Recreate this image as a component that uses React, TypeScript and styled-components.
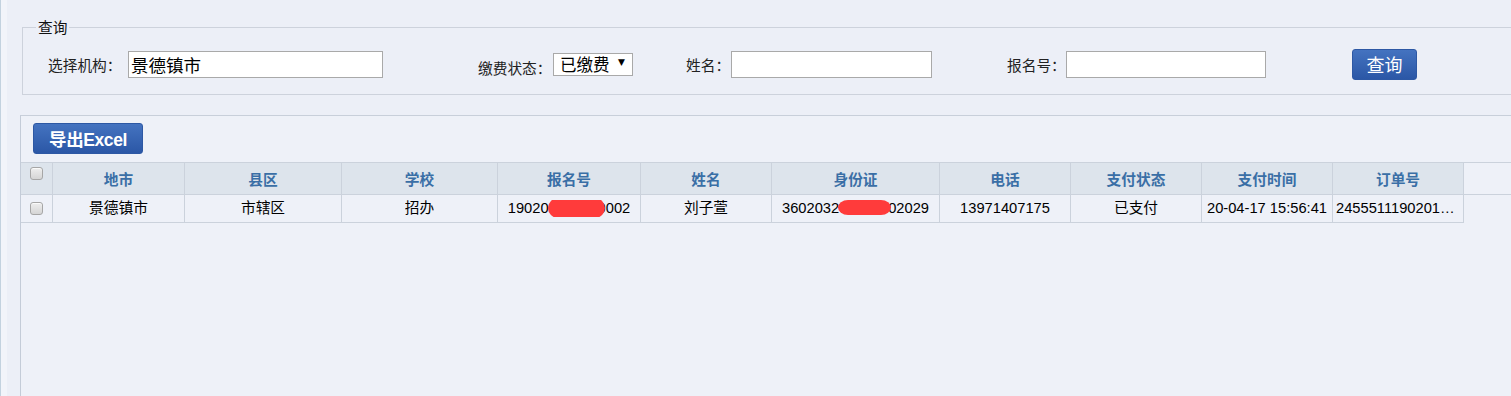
import { createGlobalStyle, styled } from "styled-components";

const GlobalStyle = createGlobalStyle`
    html, body {
        margin: 0;
        padding: 0;
        background: #eceff7;
    }
    body {
        font-family: "Liberation Sans", "Noto Sans CJK SC", sans-serif;
        color: #000;
    }
`

const columns = [
    { key: "city", title: "地市", w: 132 },
    { key: "county", title: "县区", w: 157 },
    { key: "school", title: "学校", w: 156 },
    { key: "regNo", title: "报名号", w: 143 },
    { key: "name", title: "姓名", w: 131 },
    { key: "idCard", title: "身份证", w: 168 },
    { key: "phone", title: "电话", w: 131 },
    { key: "payState", title: "支付状态", w: 131 },
    { key: "payTime", title: "支付时间", w: 131 },
    { key: "orderNo", title: "订单号", w: 131 },
]

const row: Record<string, string> = {
    city: "景德镇市",
    county: "市辖区",
    school: "招办",
    regNo: "190200000000002",
    name: "刘子萱",
    idCard: "360203200000002029",
    phone: "13971407175",
    payState: "已支付",
    payTime: "20-04-17 15:56:41",
    orderNo: "24555111902010447",
}

// red marks that hide part of the number, offsets from the start of the text
const masks: Record<string, { left: number; top: number; w: number; h: number }> = {
    regNo: { left: 40, top: -2, w: 57, h: 20 },
    idCard: { left: 56, top: 0, w: 53, h: 15 },
}

const App = () => {
    return (
        <>
            <GlobalStyle />
            <Page>
                <SideStrip />
                <Main>
                    <Search>
                        <Search__Legend>查询</Search__Legend>
                        <Search__Row>
                            <Field $w={430}>
                                <Field__Label $w={80}>选择机构：</Field__Label>
                                <Field__Input $w={255} defaultValue="景德镇市" />
                            </Field>
                            <Field $w={208}>
                                <Field__Label $w={75} $low>缴费状态：</Field__Label>
                                <Select__Wrap>
                                    <Select__Box defaultValue="paid">
                                        <option value="paid">已缴费</option>
                                        <option value="unpaid">未缴费</option>
                                    </Select__Box>
                                    <Select__Arrow>▼</Select__Arrow>
                                </Select__Wrap>
                            </Field>
                            <Field $w={321}>
                                <Field__Label $w={45}>姓名：</Field__Label>
                                <Field__Input $w={201} />
                            </Field>
                            <Field $w={345}>
                                <Field__Label $w={59}>报名号：</Field__Label>
                                <Field__Input $w={200} />
                            </Field>
                            <QueryButton>查询</QueryButton>
                        </Search__Row>
                    </Search>

                    <Grid__Panel>
                        <ExportButton>导出Excel</ExportButton>
                        <Grid__Head>
                            <Grid__HeadCells>
                                <HeadCell $w={32} $check>
                                    <CheckBox />
                                </HeadCell>
                                {columns.map(c => (
                                    <HeadCell key={c.key} $w={c.w}>{c.title}</HeadCell>
                                ))}
                            </Grid__HeadCells>
                        </Grid__Head>
                        <Grid__Row>
                            <BodyCell $w={32}>
                                <CheckBox />
                            </BodyCell>
                            {columns.map(c => (
                                <BodyCell key={c.key} $w={c.w}>
                                    <CellText>
                                        {row[c.key]}
                                        {masks[c.key] && (
                                            <Mask
                                                style={{
                                                    left: masks[c.key].left,
                                                    top: masks[c.key].top,
                                                    width: masks[c.key].w,
                                                    height: masks[c.key].h,
                                                }}
                                            />
                                        )}
                                    </CellText>
                                </BodyCell>
                            ))}
                        </Grid__Row>
                    </Grid__Panel>
                </Main>
            </Page>
        </>
    )
}

const Page = styled.div`
    display: flex;
    width: 100vw;
    height: 396px;
    overflow: hidden;
`

const SideStrip = styled.div`
    flex-shrink: 0;
    width: 6px;
    border-left: 1px solid #c3d2df;
    background: #f2f4fa;
`

const Main = styled.div`
    flex: 1;
    min-width: 0;
    display: flex;
    flex-direction: column;
`

const Search = styled.fieldset`
    box-sizing: border-box;
    margin: 17px 0 0 15px;
    width: 1600px;
    min-width: 0;
    padding: 12px 0 15px 13px;
    border: 1px solid #cdd2dc;
`

const Search__Legend = styled.legend`
    padding: 0 2px;
    font: 14.7px/20px "Noto Sans CJK SC", sans-serif;
    color: #111;
`

const Search__Row = styled.div`
    display: flex;
    align-items: center;
    height: 30px;
    padding-left: 12px;
`

const Field = styled.div<{ $w: number }>`
    display: flex;
    align-items: center;
    flex-shrink: 0;
    width: ${p => p.$w}px;
`

const Field__Label = styled.label<{ $w: number; $low?: boolean }>`
    flex-shrink: 0;
    width: ${p => p.$w}px;
    white-space: nowrap;
    font: 14.7px "Noto Sans CJK SC", sans-serif;
    color: #222;
    position: relative;
    top: ${p => (p.$low ? 3 : 0)}px;
`

const Field__Input = styled.input<{ $w: number }>`
    box-sizing: border-box;
    width: ${p => p.$w}px;
    height: 27px;
    margin: 0;
    padding: 0 2px;
    border: 1px solid #a9a9a9;
    background: #fff;
    font: 17.5px "Noto Sans CJK SC", sans-serif;
    color: #000;
    outline: none;
`

const Select__Wrap = styled.div`
    position: relative;
    width: 80px;
    height: 23px;
`

const Select__Box = styled.select`
    box-sizing: border-box;
    appearance: none;
    width: 100%;
    height: 100%;
    margin: 0;
    padding: 0 0 0 6px;
    border: 1px solid #a9a9a9;
    border-radius: 0;
    background: #fff;
    font: 16.5px/21px "Noto Sans CJK SC", sans-serif;
    color: #000;
    outline: none;
`

const Select__Arrow = styled.span`
    position: absolute;
    right: 8px;
    top: 4px;
    font: 9px "DejaVu Sans", sans-serif;
    color: #000;
    pointer-events: none;
`

const QueryButton = styled.button`
    width: 65px;
    height: 31px;
    padding: 0;
    border: 1px solid #2d58a4;
    border-radius: 3px;
    background: linear-gradient(#4473c0, #2b57a6);
    color: #fff;
    font: 18px "Noto Sans CJK SC", sans-serif;
    cursor: pointer;
`

const Grid__Panel = styled.section`
    flex: 1;
    margin: 20px 0 0 13px;
    width: 1600px;
    border-top: 1px solid #c8cfda;
    border-left: 1px solid #c4ccd8;
    background: #eef1f8;
`

const ExportButton = styled.button`
    display: block;
    width: 110px;
    height: 31px;
    margin: 7px 0 0 12px;
    padding: 0;
    border: 1px solid #2d58a4;
    border-radius: 3px;
    background: linear-gradient(#4473c0, #2b57a6);
    color: #fff;
    font: bold 17.5px "Liberation Sans", "Noto Sans CJK SC", sans-serif;
    letter-spacing: -0.4px;
    cursor: pointer;
`

const Grid__Head = styled.div`
    margin-top: 8px;
    border-top: 1px solid #cbd2dc;
    border-bottom: 1px solid #cbd2dc;
`

const Grid__HeadCells = styled.div`
    display: inline-flex;
    background: #dde4ec;
`

const HeadCell = styled.div<{ $w: number; $check?: boolean }>`
    box-sizing: border-box;
    display: flex;
    align-items: ${p => (p.$check ? "flex-start" : "center")};
    justify-content: center;
    width: ${p => p.$w}px;
    height: 31px;
    padding-top: ${p => (p.$check ? 4 : 0)}px;
    border-right: 1px solid #cbd2dc;
    font: bold 14.7px "Noto Sans CJK SC", sans-serif;
    color: #3a6fa6;
`

const Grid__Row = styled.div`
    display: flex;
`

const BodyCell = styled.div<{ $w: number }>`
    box-sizing: border-box;
    display: flex;
    align-items: center;
    justify-content: center;
    width: ${p => p.$w}px;
    height: 28px;
    padding: 0 3px;
    border-right: 1px solid #cbd2dc;
    border-bottom: 1px solid #cbd2dc;
    overflow: hidden;
`

const CellText = styled.span`
    position: relative;
    display: block;
    max-width: 100%;
    overflow: hidden;
    white-space: nowrap;
    text-overflow: ellipsis;
    font: 14.7px/17px "Liberation Sans", "Noto Sans CJK SC", sans-serif;
    color: #000;
`

const Mask = styled.span`
    position: absolute;
    background: #ff3b3b;
    border-radius: 10px / 50%;
`

const CheckBox = styled.span`
    box-sizing: border-box;
    display: block;
    width: 13px;
    height: 13px;
    border: 1px solid #a6a6a6;
    border-radius: 3px;
    background: linear-gradient(#eeeeee, #d5d5d5);
    box-shadow: inset 0 1px 0 #fafafa;
`

export default App;
